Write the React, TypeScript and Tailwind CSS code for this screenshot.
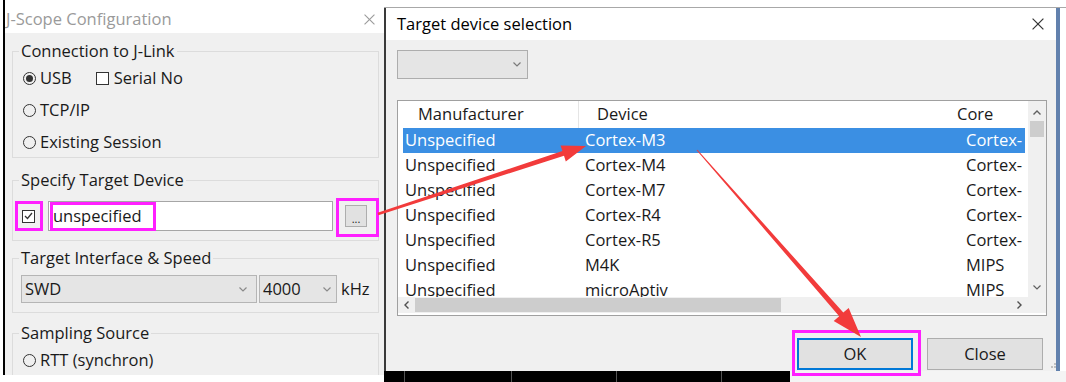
import type { ReactNode } from 'react';

// small glyphs used by the win32 controls
const ChevronDown = ({ color = '#6b6b6b' }: { color?: string }) => (
    <svg width="8" height="5" viewBox="0 0 8 5">
        <polyline points="0.5,0.5 4,4 7.5,0.5" fill="none" stroke={color} strokeWidth="1.2" />
    </svg>
);
const ChevronUp = () => (
    <svg width="8" height="5" viewBox="0 0 8 5">
        <polyline points="0.5,4.5 4,1 7.5,4.5" fill="none" stroke="#606060" strokeWidth="1.4" />
    </svg>
);
const ChevronLeft = () => (
    <svg width="5" height="8" viewBox="0 0 5 8">
        <polyline points="4.5,0.5 1,4 4.5,7.5" fill="none" stroke="#505050" strokeWidth="1.4" />
    </svg>
);
const ChevronRight = () => (
    <svg width="5" height="8" viewBox="0 0 5 8">
        <polyline points="0.5,0.5 4,4 0.5,7.5" fill="none" stroke="#505050" strokeWidth="1.4" />
    </svg>
);
const CloseX = ({ color, size }: { color: string; size: number }) => (
    <svg width={size} height={size} viewBox="0 0 10 10">
        <line x1="0.5" y1="0.5" x2="9.5" y2="9.5" stroke={color} strokeWidth="1" />
        <line x1="9.5" y1="0.5" x2="0.5" y2="9.5" stroke={color} strokeWidth="1" />
    </svg>
);

const Radio = ({ checked }: { checked?: boolean }) => (
    <span className="w-[13px] h-[13px] rounded-full border border-[#333] flex items-center justify-center shrink-0">
        {checked && <span className="w-[7px] h-[7px] rounded-full bg-[#333]" />}
    </span>
);

const Check = ({ checked }: { checked?: boolean }) => (
    <span className="w-[13px] h-[13px] border border-[#333] flex items-center justify-center shrink-0 bg-white">
        {checked && (
            <svg width="9" height="8" viewBox="0 0 9 8">
                <polyline points="1,4 3.5,6.5 8,1" fill="none" stroke="#333" strokeWidth="1.3" />
            </svg>
        )}
    </span>
);

const Group = ({ title, className, children }: { title: string; className: string; children: ReactNode }) => (
    <fieldset className={`border border-[#dcdcdc] px-[6px] ${className}`}>
        <legend className="px-[2px] leading-[20px]">{title}</legend>
        {children}
    </fieldset>
);

const rows = [
    ['Unspecified', 'Cortex-M3', 'Cortex-'],
    ['Unspecified', 'Cortex-M4', 'Cortex-'],
    ['Unspecified', 'Cortex-M7', 'Cortex-'],
    ['Unspecified', 'Cortex-R4', 'Cortex-'],
    ['Unspecified', 'Cortex-R5', 'Cortex-'],
    ['Unspecified', 'M4K', 'MIPS'],
    ['Unspecified', 'microAptiv', 'MIPS'],
];

// tapered arrow as one polygon
function arrow(x0: number, y0: number, x1: number, y1: number, w0: number, w1: number, hl: number, hw: number) {
    const dx = x1 - x0, dy = y1 - y0, len = Math.hypot(dx, dy);
    const ux = dx / len, uy = dy / len, px = -uy, py = ux;
    const bx = x1 - ux * hl, by = y1 - uy * hl;
    const pts = [
        [x0 + px * w0 / 2, y0 + py * w0 / 2],
        [bx + px * w1 / 2, by + py * w1 / 2],
        [bx + px * hw / 2, by + py * hw / 2],
        [x1, y1],
        [bx - px * hw / 2, by - py * hw / 2],
        [bx - px * w1 / 2, by - py * w1 / 2],
        [x0 - px * w0 / 2, y0 - py * w0 / 2],
    ];
    return pts.map((p) => p.map((v) => v.toFixed(1)).join(',')).join(' ');
}

const App = () => {
    return (
        <div className="relative w-[1066px] h-[382px] overflow-hidden bg-white flex font-['Open_Sans',sans-serif] text-[16.5px] text-[#1a1a1a]">
            {/* J-Scope Configuration */}
            <div className="w-[384px] h-[375px] shrink-0 flex">
                <div className="w-[3px] bg-white" />
                <div className="flex-1 flex flex-col border-l-2 border-black bg-[#f0f0f0] overflow-hidden">
                    <div className="h-[33px] shrink-0 bg-white flex items-center justify-between pl-[1px] pr-[9px] pt-[6px]">
                        <span className="text-[#9a9a9a]">J-Scope Configuration</span>
                        <CloseX color="#9a9a9a" size={11} />
                    </div>
                    <div className="pl-[7px] pr-[5px] flex flex-col">
                        <Group title="Connection to J-Link" className="mt-[8px] pb-[5px]">
                            <div className="mt-[7px] ml-[4px] flex flex-col gap-[12px]">
                                <div className="h-[20px] flex items-center">
                                    <Radio checked />
                                    <span className="ml-[4px]">USB</span>
                                    <span className="ml-[24px]"><Check /></span>
                                    <span className="ml-[5px]">Serial No</span>
                                </div>
                                <div className="h-[20px] flex items-center">
                                    <Radio />
                                    <span className="ml-[4px]">TCP/IP</span>
                                </div>
                                <div className="h-[20px] flex items-center">
                                    <Radio />
                                    <span className="ml-[4px]">Existing Session</span>
                                </div>
                            </div>
                        </Group>

                        <Group title="Specify Target Device" className="mt-[12px] pb-[9px]">
                            <div className="mt-[11px] ml-[3px] h-[30px] flex items-center">
                                <Check checked />
                                <div className="ml-[13px] w-[285px] h-[30px] bg-white border border-[#a6a6a6] flex items-center pl-[4px]">
                                    unspecified
                                </div>
                                <div className="ml-[12px] w-[22px] h-[22px] bg-[#e1e1e1] border border-[#adadad] flex items-center justify-center text-[11px] leading-none pt-[4px]">
                                    ...
                                </div>
                            </div>
                        </Group>

                        <Group title="Target Interface & Speed" className="mt-[7px] pb-[9px]">
                            <div className="mt-[7px] ml-[2px] h-[28px] flex items-center">
                                <div className="w-[236px] h-[28px] bg-[#e5e5e5] border border-[#b5b5b5] flex items-center justify-between pl-[3px] pr-[9px]">
                                    <span>SWD</span>
                                    <ChevronDown color="#8a8a8a" />
                                </div>
                                <div className="ml-[2px] w-[78px] h-[28px] bg-[#e5e5e5] border border-[#b5b5b5] flex items-center justify-between pl-[3px] pr-[5px]">
                                    <span>4000</span>
                                    <ChevronDown color="#8a8a8a" />
                                </div>
                                <span className="ml-[4px]">kHz</span>
                            </div>
                        </Group>

                        <Group title="Sampling Source" className="mt-[10px] pb-[20px]">
                            <div className="mt-[7px] ml-[4px] h-[20px] flex items-center">
                                <Radio />
                                <span className="ml-[4px]">RTT (synchron)</span>
                            </div>
                        </Group>
                    </div>
                </div>
            </div>

            {/* Target device selection */}
            <div className="flex-1 flex flex-col">
                <div className="h-[7px] shrink-0 bg-white" />
                <div className="h-[364px] shrink-0 flex border-t border-[#a8a8a8]">
                    <div className="flex-1 flex flex-col border-l-2 border-[#3a3a3a] bg-[#f0f0f0]">
                        <div className="h-[32px] shrink-0 bg-white flex items-center justify-between pl-[11px] pr-[12px]">
                            <span className="text-black">Target device selection</span>
                            <CloseX color="#333" size={12} />
                        </div>

                        <div className="mt-[10px] ml-[11px] w-[131px] h-[29px] bg-[#e5e5e5] border border-[#adadad] flex items-center justify-end pr-[6px]">
                            <ChevronDown color="#7a7a7a" />
                        </div>

                        {/* device list */}
                        <div className="mt-[21px] ml-[11px] w-[650px] h-[216px] bg-white border border-[#a0a0a0] flex flex-col overflow-hidden">
                            <div className="h-[196px] flex">
                                <div className="flex-1 flex flex-col overflow-hidden">
                                    <div className="h-[27px] shrink-0 flex items-center text-[#1a1a1a]">
                                        <div className="w-[181px] h-full flex items-center pl-[20px] border-r border-[#e5e5e5]">Manufacturer</div>
                                        <div className="w-[370px] pl-[18px]">Device</div>
                                        <div className="pl-[8px]">Core</div>
                                    </div>
                                    <div className="ml-[5px] mr-[3px] flex flex-col">
                                        {rows.map((r, i) => (
                                            <div
                                                key={i}
                                                className={`h-[25px] shrink-0 flex items-center whitespace-nowrap ${i === 0 ? 'bg-[#3b8fe3] text-white' : ''}`}
                                            >
                                                <div className="w-[180px] pl-[2px]">{r[0]}</div>
                                                <div className="w-[381px] pl-[2px]">{r[1]}</div>
                                                <div className="pl-[2px]">{r[2]}</div>
                                            </div>
                                        ))}
                                    </div>
                                </div>
                                <div className="w-[18px] bg-[#f0f0f0] flex flex-col items-center">
                                    <div className="h-[20px] flex items-center justify-center pt-[2px]"><ChevronUp /></div>
                                    <div className="w-[14px] h-[16px] bg-[#cdcdcd]" />
                                    <div className="flex-1" />
                                    <div className="h-[20px] flex items-center justify-center"><ChevronDown color="#606060" /></div>
                                </div>
                            </div>
                            <div className="h-[16px] flex">
                                <div className="flex-1 bg-[#f0f0f0] flex items-center">
                                    <div className="w-[17px] flex justify-center"><ChevronLeft /></div>
                                    <div className="w-[366px] h-[14px] bg-[#cdcdcd]" />
                                    <div className="flex-1" />
                                    <div className="w-[17px] flex justify-center"><ChevronRight /></div>
                                </div>
                                <div className="w-[18px] bg-[#f0f0f0]" />
                            </div>
                        </div>

                        <div className="mt-[22px] flex items-end justify-end">
                            <div className="w-[116px] h-[32px] bg-[#e1e1e1] border-2 border-[#0078d7] flex items-center justify-center">OK</div>
                            <div className="ml-[14px] w-[116px] h-[32px] bg-[#e1e1e1] border border-[#adadad] flex items-center justify-center">Close</div>
                            <div className="ml-[3px] w-[10px] h-[10px] mb-[2px] flex flex-col items-end justify-end gap-[1px]">
                                <div className="w-[2px] h-[2px] bg-[#c0c0c0]" />
                                <div className="flex gap-[1px]"><div className="w-[2px] h-[2px] bg-[#c0c0c0]" /><div className="w-[2px] h-[2px] bg-[#c0c0c0]" /></div>
                            </div>
                        </div>
                    </div>
                    <div className="w-[4px] bg-[#6281ad]" />
                    <div className="w-[6px] bg-white" />
                </div>
                <div className="flex-1 flex">
                    <div className="w-[406px] bg-black flex">
                        <div className="w-[21px] border-r border-[#555]" />
                        <div className="w-[107px] border-r border-[#555]" />
                        <div className="w-[105px] border-r border-[#555]" />
                        <div className="w-[105px] border-r border-[#555]" />
                    </div>
                    <div className="flex-1 bg-[#f4f4f4]" />
                </div>
            </div>

            {/* annotations */}
            <svg className="absolute inset-0 pointer-events-none" width="1066" height="382">
                <g fill="none" stroke="#ff1fff" strokeWidth="3">
                    <rect x="16.5" y="202.5" width="25" height="27" />
                    <rect x="51.5" y="203.5" width="103" height="26" />
                    <rect x="337.5" y="199.5" width="40" height="36" />
                    <rect x="793.5" y="331.5" width="126" height="43" />
                </g>
                <polygon points={arrow(378, 214, 586, 146, 2.5, 5, 24, 17)} fill="#f23b3b" />
                <polygon points={arrow(697, 150, 861, 337, 1, 5.5, 30, 20)} fill="#f23b3b" />
            </svg>
        </div>
    );
};

export default App;
